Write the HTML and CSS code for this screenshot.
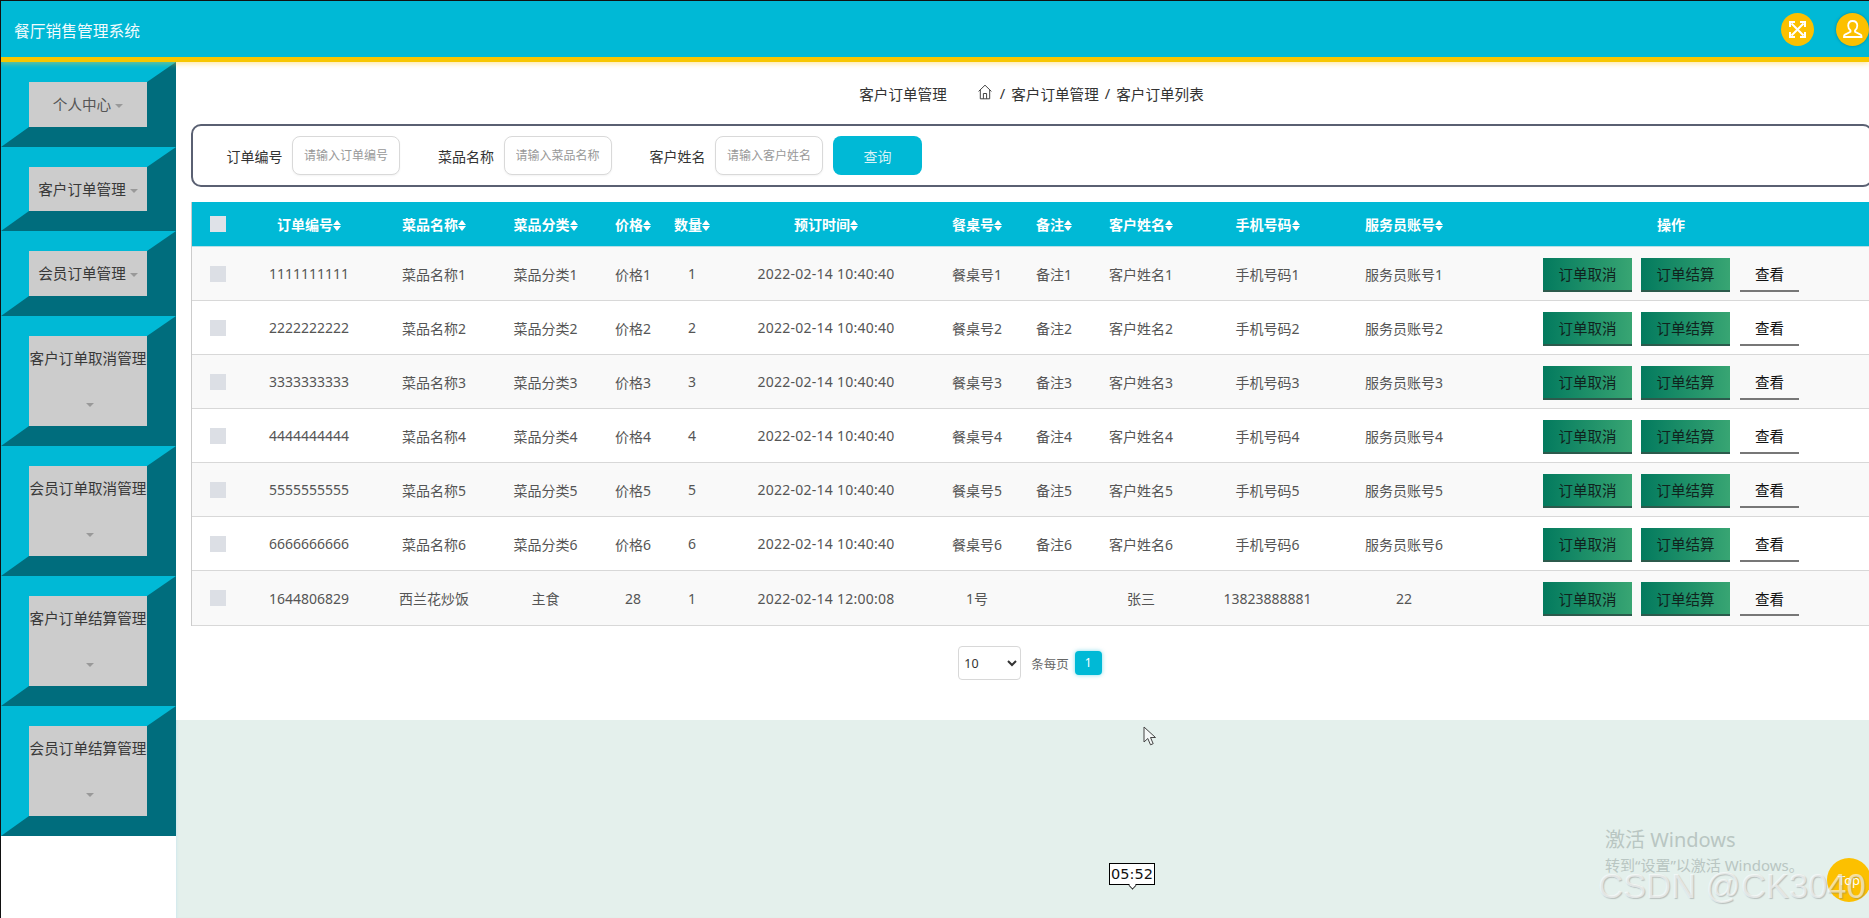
FILE: index.html
```html
<!DOCTYPE html>
<html lang="zh-CN">
<head>
<meta charset="utf-8">
<title>餐厅销售管理系统</title>
<link rel="stylesheet" href="styles.css">
</head>
<body>
<div class="app">
  <header class="topbar">
    <div class="brand">餐厅销售管理系统</div>
    <div class="top-actions">
      <span class="round-btn">
        <svg viewBox="0 0 33 33" width="33" height="33" fill="none" stroke="#fff" stroke-width="2"><path d="M10.500 10.500 22.500 22.500M22.500 10.500 10.500 22.500"/><path d="M9 14V9h5M19 9h5v5M24 19v5h-5M14 24H9v-5"/></svg>
      </span>
      <span class="round-btn round-btn-shadow">
        <svg viewBox="0 0 33 33" width="33" height="33" fill="none" stroke="#fff" stroke-width="1.800"><path d="M16.500 8c3 0 4.800 2.100 4.800 4.800 0 2-1 3.500-2.300 4.600v1.400l5.500 2.800c.8.400 1 1 1 1.700v.7H8v-.7c0-.7.200-1.300 1-1.700l5.500-2.800v-1.400c-1.300-1.100-2.300-2.600-2.300-4.600C12.200 10.100 13.500 8 16.500 8z"/></svg>
      </span>
    </div>
  </header>
  <div class="layout">
    <aside class="sidebar">
      <div class="nav-item nav-item-muted">个人中心<i class="caret"></i></div>
      <div class="nav-item">客户订单管理<i class="caret"></i></div>
      <div class="nav-item">会员订单管理<i class="caret"></i></div>
      <div class="nav-item">客户订单取消管理<i class="caret"></i></div>
      <div class="nav-item">会员订单取消管理<i class="caret"></i></div>
      <div class="nav-item">客户订单结算管理<i class="caret"></i></div>
      <div class="nav-item">会员订单结算管理<i class="caret"></i></div>
    </aside>
    <main class="main">
      <section class="panel">
        <div class="crumbs">
          <span class="crumb-title">客户订单管理</span>
          <svg class="home" viewBox="0 0 14 16" width="14" height="16" fill="none" stroke="#444" stroke-width="1"><path d="M.6 7.400 7 1.200l6.400 6.200M2.300 6v8.800h9.400V6M5.400 14.800V9.500h3.200v5.300"/></svg>
          <span>/</span><span>客户订单管理</span><span>/</span><span>客户订单列表</span>
        </div>
        <form class="search">
          <label class="field"><span>订单编号</span><input class="search-input" placeholder="请输入订单编号"></label>
          <label class="field"><span>菜品名称</span><input class="search-input" placeholder="请输入菜品名称"></label>
          <label class="field field-last"><span>客户姓名</span><input class="search-input" placeholder="请输入客户姓名"></label>
          <button class="search-btn" type="button">查询</button>
        </form>
        <table class="orders">
          <colgroup>
            <col class="c1"><col class="c2"><col class="c3"><col class="c4"><col class="c5"><col class="c6"><col class="c7"><col class="c8"><col class="c9"><col class="c10"><col class="c11"><col class="c12"><col class="c13">
          </colgroup>
          <thead>
            <tr>
              <th><span class="check check-head"></span></th>
              <th>订单编号<i class="sort"></i></th>
              <th>菜品名称<i class="sort"></i></th>
              <th>菜品分类<i class="sort"></i></th>
              <th>价格<i class="sort"></i></th>
              <th>数量<i class="sort"></i></th>
              <th>预订时间<i class="sort"></i></th>
              <th>餐桌号<i class="sort"></i></th>
              <th>备注<i class="sort"></i></th>
              <th>客户姓名<i class="sort"></i></th>
              <th>手机号码<i class="sort"></i></th>
              <th>服务员账号<i class="sort"></i></th>
              <th>操作</th>
            </tr>
          </thead>
          <tbody>
            <tr><td><span class="check"></span></td><td>1111111111</td><td>菜品名称1</td><td>菜品分类1</td><td>价格1</td><td>1</td><td class="time">2022-02-14 10:40:40</td><td>餐桌号1</td><td>备注1</td><td>客户姓名1</td><td>手机号码1</td><td>服务员账号1</td><td><div class="ops"><button class="op" type="button">订单取消</button><button class="op" type="button">订单结算</button><button class="view" type="button">查看</button></div></td></tr>
            <tr><td><span class="check"></span></td><td>2222222222</td><td>菜品名称2</td><td>菜品分类2</td><td>价格2</td><td>2</td><td class="time">2022-02-14 10:40:40</td><td>餐桌号2</td><td>备注2</td><td>客户姓名2</td><td>手机号码2</td><td>服务员账号2</td><td><div class="ops"><button class="op" type="button">订单取消</button><button class="op" type="button">订单结算</button><button class="view" type="button">查看</button></div></td></tr>
            <tr><td><span class="check"></span></td><td>3333333333</td><td>菜品名称3</td><td>菜品分类3</td><td>价格3</td><td>3</td><td class="time">2022-02-14 10:40:40</td><td>餐桌号3</td><td>备注3</td><td>客户姓名3</td><td>手机号码3</td><td>服务员账号3</td><td><div class="ops"><button class="op" type="button">订单取消</button><button class="op" type="button">订单结算</button><button class="view" type="button">查看</button></div></td></tr>
            <tr><td><span class="check"></span></td><td>4444444444</td><td>菜品名称4</td><td>菜品分类4</td><td>价格4</td><td>4</td><td class="time">2022-02-14 10:40:40</td><td>餐桌号4</td><td>备注4</td><td>客户姓名4</td><td>手机号码4</td><td>服务员账号4</td><td><div class="ops"><button class="op" type="button">订单取消</button><button class="op" type="button">订单结算</button><button class="view" type="button">查看</button></div></td></tr>
            <tr><td><span class="check"></span></td><td>5555555555</td><td>菜品名称5</td><td>菜品分类5</td><td>价格5</td><td>5</td><td class="time">2022-02-14 10:40:40</td><td>餐桌号5</td><td>备注5</td><td>客户姓名5</td><td>手机号码5</td><td>服务员账号5</td><td><div class="ops"><button class="op" type="button">订单取消</button><button class="op" type="button">订单结算</button><button class="view" type="button">查看</button></div></td></tr>
            <tr><td><span class="check"></span></td><td>6666666666</td><td>菜品名称6</td><td>菜品分类6</td><td>价格6</td><td>6</td><td class="time">2022-02-14 10:40:40</td><td>餐桌号6</td><td>备注6</td><td>客户姓名6</td><td>手机号码6</td><td>服务员账号6</td><td><div class="ops"><button class="op" type="button">订单取消</button><button class="op" type="button">订单结算</button><button class="view" type="button">查看</button></div></td></tr>
            <tr><td><span class="check"></span></td><td>1644806829</td><td>西兰花炒饭</td><td>主食</td><td>28</td><td>1</td><td class="time">2022-02-14 12:00:08</td><td>1号</td><td></td><td>张三</td><td>13823888881</td><td>22</td><td><div class="ops"><button class="op" type="button">订单取消</button><button class="op" type="button">订单结算</button><button class="view" type="button">查看</button></div></td></tr>
          </tbody>
        </table>
        <div class="pager">
          <select class="page-size"><option>10</option></select>
          <span class="page-label">条每页</span>
          <span class="page-num">1</span>
        </div>
      </section>
    </main>
  </div>
  <svg class="cursor" viewBox="0 0 14 20" width="14" height="20"><path d="M1 1v15l3.800-3.500 2.700 6.300 2.700-1.100-2.700-6.200H12.500z" fill="#f4f8f7" stroke="#444" stroke-width="1"/></svg>
  <div class="time-tip">05:52</div>
  <div class="activate">
    <div class="activate-title">激活 Windows</div>
    <div class="activate-sub">转到“设置”以激活 Windows。</div>
  </div>
  <div class="to-top">Top</div>
  <div class="stamp">CSDN @CK3040</div>
</div>
</body>
</html>
```

FILE: styles.css
```css
* { box-sizing: border-box; }
html, body { margin: 0; padding: 0; height: 100%; overflow: hidden; }
body { font-family: "Noto Sans", "Noto Sans CJK SC", sans-serif; font-size: 14px; color: #555; background: #fff; }

.app { position: relative; height: 918px; display: flex; flex-direction: column; border-top: 1px solid #111; border-left: 1px solid #111; overflow: hidden; }

.topbar { flex: none; height: 61px; background: #00b9d6; border-bottom: 5px solid #f7c600; box-shadow: 0 2px 5px rgba(255, 205, 60, .45); display: flex; align-items: center; justify-content: space-between; position: relative; z-index: 2; padding-left: 13px; }
.brand { color: #f2fbfd; font-size: 15.750px; padding-top: 3px; }
.top-actions { display: flex; gap: 22px; }
.round-btn { width: 33px; height: 33px; border-radius: 50%; background: #fcc000; display: block; }
.round-btn svg { display: block; }
.round-btn-shadow { box-shadow: 0 0 3px rgba(0, 90, 90, .5); }

.layout { flex: 1; display: flex; min-height: 0; }
.sidebar { flex: none; width: 175px; background: #fff; position: relative; z-index: 1; }
.nav-item { border-style: solid; border-width: 20px 29px 20px 28px; border-color: #00b9d6 #006d7d #006d7d #00b9d6; background: #ccc; color: #383838; font-size: 14.600px; line-height: 45px; text-align: center; }
.nav-item:nth-child(-n+3) { line-height: 44.670px; }
.nav-item-muted { color: #555; }
.caret { display: inline-block; width: 0; height: 0; margin-left: 4px; border: 4px solid transparent; border-top-color: #999; border-bottom-width: 0; vertical-align: middle; }

.main { flex: 1; min-width: 0; background: #e4f0ec; box-shadow: inset 2px 0 2px -1px rgba(190, 225, 240, .5); overflow: hidden; }
.panel { height: 658px; background: #fff; padding-left: 15px; }

.crumbs { height: 62px; display: flex; align-items: center; justify-content: center; gap: 6px; color: #333; font-size: 14.600px; padding-left: 3px; }
.crumb-title { margin-right: 25px; }
.home { margin: -3px 2px 0 0; }

.search { height: 63px; margin-right: -4px; border: 2px solid #5a6072; border-radius: 10px; display: flex; align-items: center; padding-left: 33.500px; }
.field { display: flex; align-items: center; gap: 9.500px; margin-right: 38px; color: #333; font-size: 14px; }
.field-last { margin-right: 10px; }
.search-input { width: 108px; height: 39px; border: 1px solid #d9d9d9; border-radius: 8px; padding: 0 6px 0 11px; font: 12px "Noto Sans", "Noto Sans CJK SC", sans-serif; outline: none; color: #555; box-shadow: 0 1px 2px rgba(0, 0, 0, .05); }
.search-input::placeholder { color: #999; opacity: 1; }
.search-btn { width: 89px; height: 39px; border: 0; border-radius: 8px; background: #00b9d6; color: #d6f3f8; font: 14px "Noto Sans", "Noto Sans CJK SC", sans-serif; padding: 0; }

.orders { width: 1688px; margin-top: 15px; table-layout: fixed; border-collapse: separate; border-spacing: 0; border-left: 1px solid #ccc; }
.c1 { width: 53px; } .c2 { width: 128px; } .c3 { width: 122px; } .c4 { width: 101px; } .c5 { width: 74px; } .c6 { width: 44px; } .c7 { width: 224px; } .c8 { width: 78px; } .c9 { width: 76px; } .c10 { width: 98px; } .c11 { width: 155px; } .c12 { width: 118px; } .c13 { width: 416px; }
.orders th { height: 45px; padding: 0; background: #00b9d6; color: #fff; font-weight: 700; font-size: 14px; border-bottom: 1px solid #b7dfe6; text-align: center; white-space: nowrap; }
.orders td { height: 54px; padding: 0; text-align: center; color: #555; border-bottom: 1px solid #d8d8d8; white-space: nowrap; }
.orders tbody tr:nth-child(odd) td { background: #f9f9f9; }
.orders tbody tr:last-child td { height: 55px; }
.orders .time { letter-spacing: .25px; }
.check { display: block; width: 16px; height: 16px; margin-left: 18px; background: #dcdfe5; }
.check-head { background: #dfe2e8; }
.sort { display: inline-block; width: 8px; height: 11px; position: relative; vertical-align: -1px; }
.sort::before, .sort::after { content: ""; position: absolute; left: 0; border: 4px solid transparent; }
.sort::before { top: 0; border-top-width: 0; border-bottom-width: 5px; border-bottom-color: #fff; }
.sort::after { bottom: 0; border-bottom-width: 0; border-top-width: 5px; border-top-color: #fff; }

.ops { display: flex; justify-content: center; gap: 9px; padding-top: 2px; }
.op { width: 89px; height: 34px; padding: 0; border: 0; border-bottom: 2px solid #2c5a4c; background: linear-gradient(90deg, #037a5e, #38a573); color: #10231d; font: 14.500px "Noto Sans", "Noto Sans CJK SC", sans-serif; }
.view { width: 59px; height: 34px; margin-left: 1px; padding: 0; border: 0; border-bottom: 2px solid #777; background: transparent; color: #111; font: 14.500px "Noto Sans", "Noto Sans CJK SC", sans-serif; }

.pager { margin-top: 20px; display: flex; align-items: center; justify-content: center; }
.page-size { width: 63px; height: 34px; border: 1px solid #d8d8d8; border-radius: 4px; background: #fff; color: #333; font: 12.500px "Noto Sans", sans-serif; padding-left: 1px; outline: none; }
.page-label { margin: 0 6px 0 10px; font-size: 12.500px; color: #666; }
.page-num { width: 27px; height: 24px; border-radius: 4px; background: #00b9d6; color: #fff; font-size: 12px; line-height: 24px; text-align: center; box-shadow: 0 0 4px rgba(0, 185, 214, .5); }

.cursor { position: absolute; left: 1142px; top: 725px; }
.time-tip { position: absolute; left: 1108px; top: 862px; width: 46px; height: 22px; border: 1px solid #000; background: #fff; color: #111; font: 14.500px/20px "DejaVu Sans", sans-serif; text-align: center; }
.time-tip::after { content: ""; position: absolute; left: 19px; bottom: -5px; width: 6px; height: 6px; background: #fff; border-right: 1px solid #000; border-bottom: 1px solid #000; transform: rotate(45deg) scale(.8); }

.activate { position: absolute; left: 1604px; top: 826px; color: #b9c6c2; }
.activate-title { font-size: 20px; line-height: 26px; }
.activate-sub { font-size: 15px; line-height: 20px; margin-top: 2px; }
.to-top { position: absolute; left: 1826px; top: 857px; width: 44px; height: 44px; border-radius: 50%; background: #fcc000; color: #fff; font-size: 13px; line-height: 44px; text-align: center; }
.stamp { position: absolute; left: 1597px; top: 866px; font: 34.600px/38px "Liberation Sans", sans-serif; color: rgba(255, 255, 255, .6); text-shadow: 1px 1px 1px rgba(120, 120, 120, .4); white-space: nowrap; }
```
